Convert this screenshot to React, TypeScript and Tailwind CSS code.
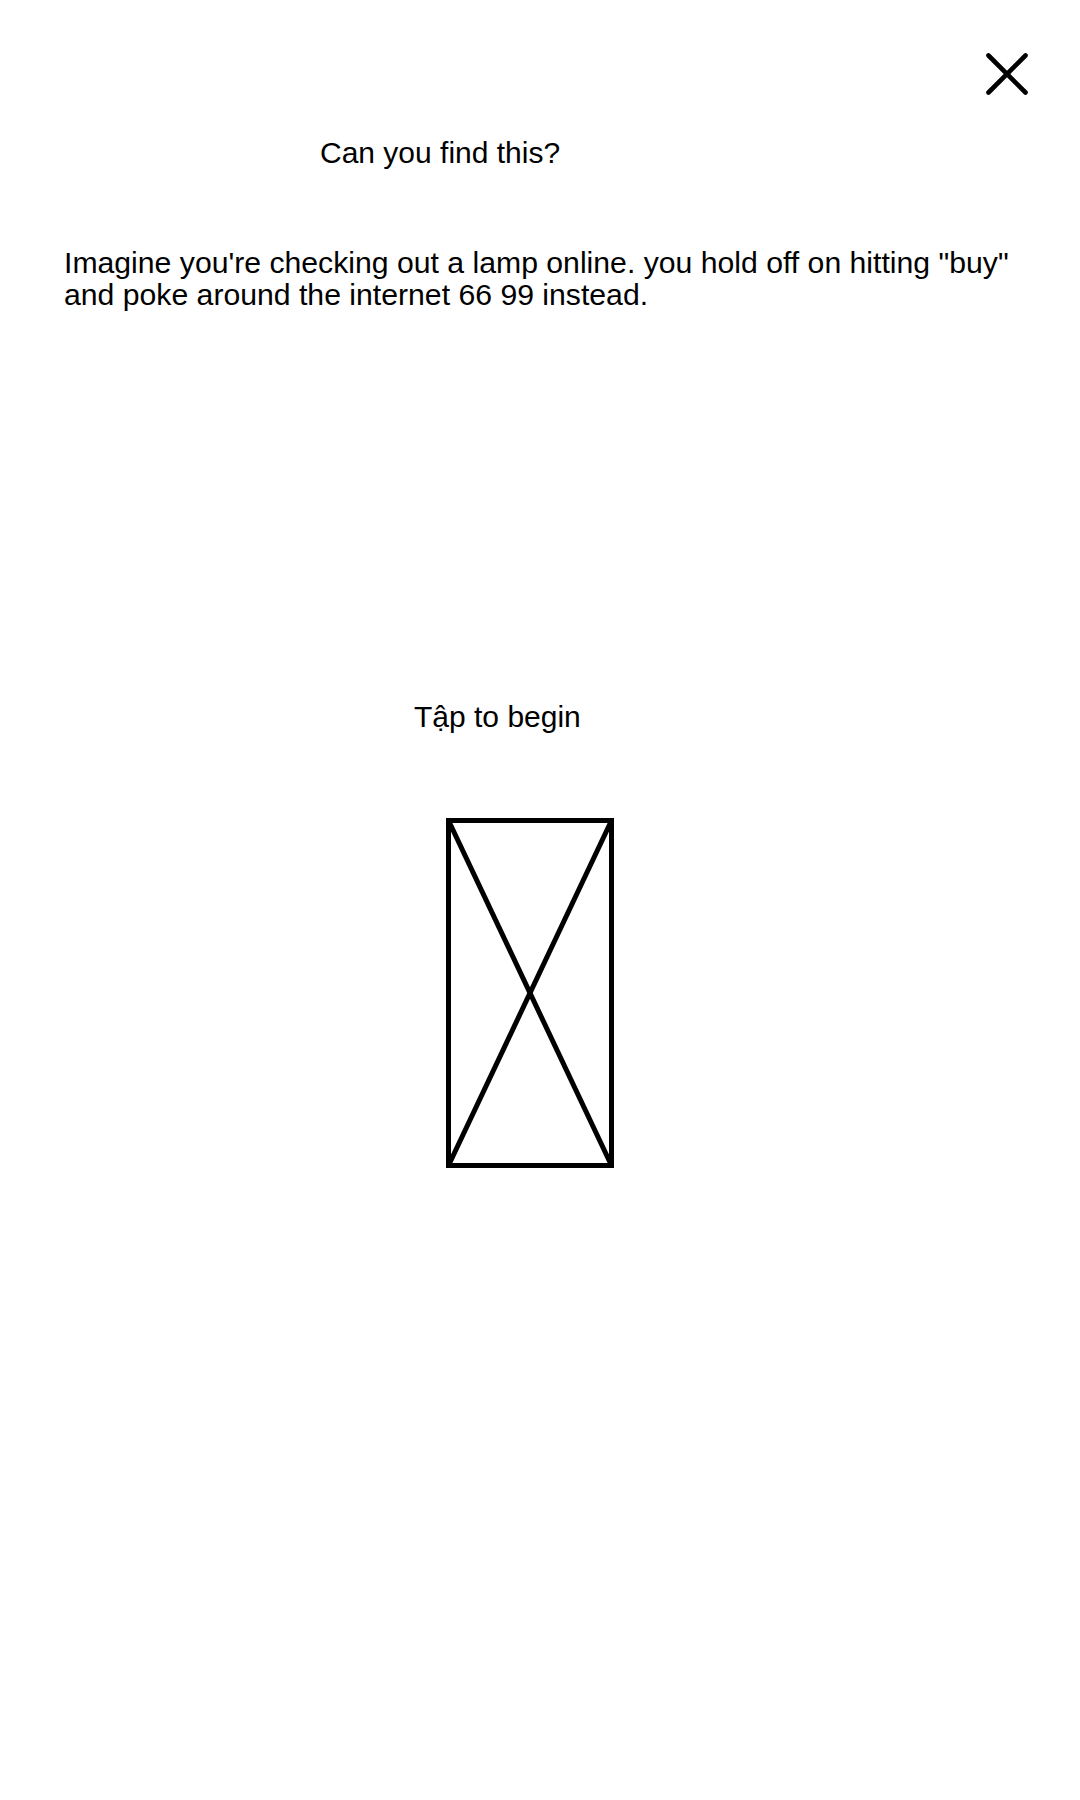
import React from "react";

export default function App() {
  return (
    <div
      className="w-[1080px] h-[1800px] bg-white text-black flex flex-col"
      style={{ fontFamily: '"Liberation Sans", Arial, sans-serif' }}
    >
      <div className="flex justify-end pt-[53px] pr-[52px]">
        <button aria-label="Close" className="w-[42px] h-[42px]">
          <svg width="42" height="42" viewBox="0 0 42 42">
            <line x1="2.5" y1="2.5" x2="39.5" y2="39.5" stroke="black" strokeWidth="4.6" strokeLinecap="round" />
            <line x1="39.5" y1="2.5" x2="2.5" y2="39.5" stroke="black" strokeWidth="4.6" strokeLinecap="round" />
          </svg>
        </button>
      </div>
      <h1 className="mt-[42px] ml-[320px] text-[30px] leading-[31px] font-normal">Can you find this?</h1>
      <p className="mt-[79px] px-[64px] text-[30.2px] leading-[31.5px]">
        Imagine you're checking out a lamp online. you hold off on hitting "buy" and poke around the internet 66 99 instead.
      </p>
      <p className="mt-[391px] ml-[414px] text-[30px] leading-[31px]">Tập to begin</p>
      <div className="mt-[85px] ml-[445px]">
        <svg width="170" height="352" viewBox="0 0 170 352">
          <rect x="3.5" y="3.5" width="163" height="345" fill="none" stroke="black" strokeWidth="5" />
          <line x1="3.5" y1="3.5" x2="166.5" y2="348.5" stroke="black" strokeWidth="5" />
          <line x1="166.5" y1="3.5" x2="3.5" y2="348.5" stroke="black" strokeWidth="5" />
        </svg>
      </div>
    </div>
  );
}
